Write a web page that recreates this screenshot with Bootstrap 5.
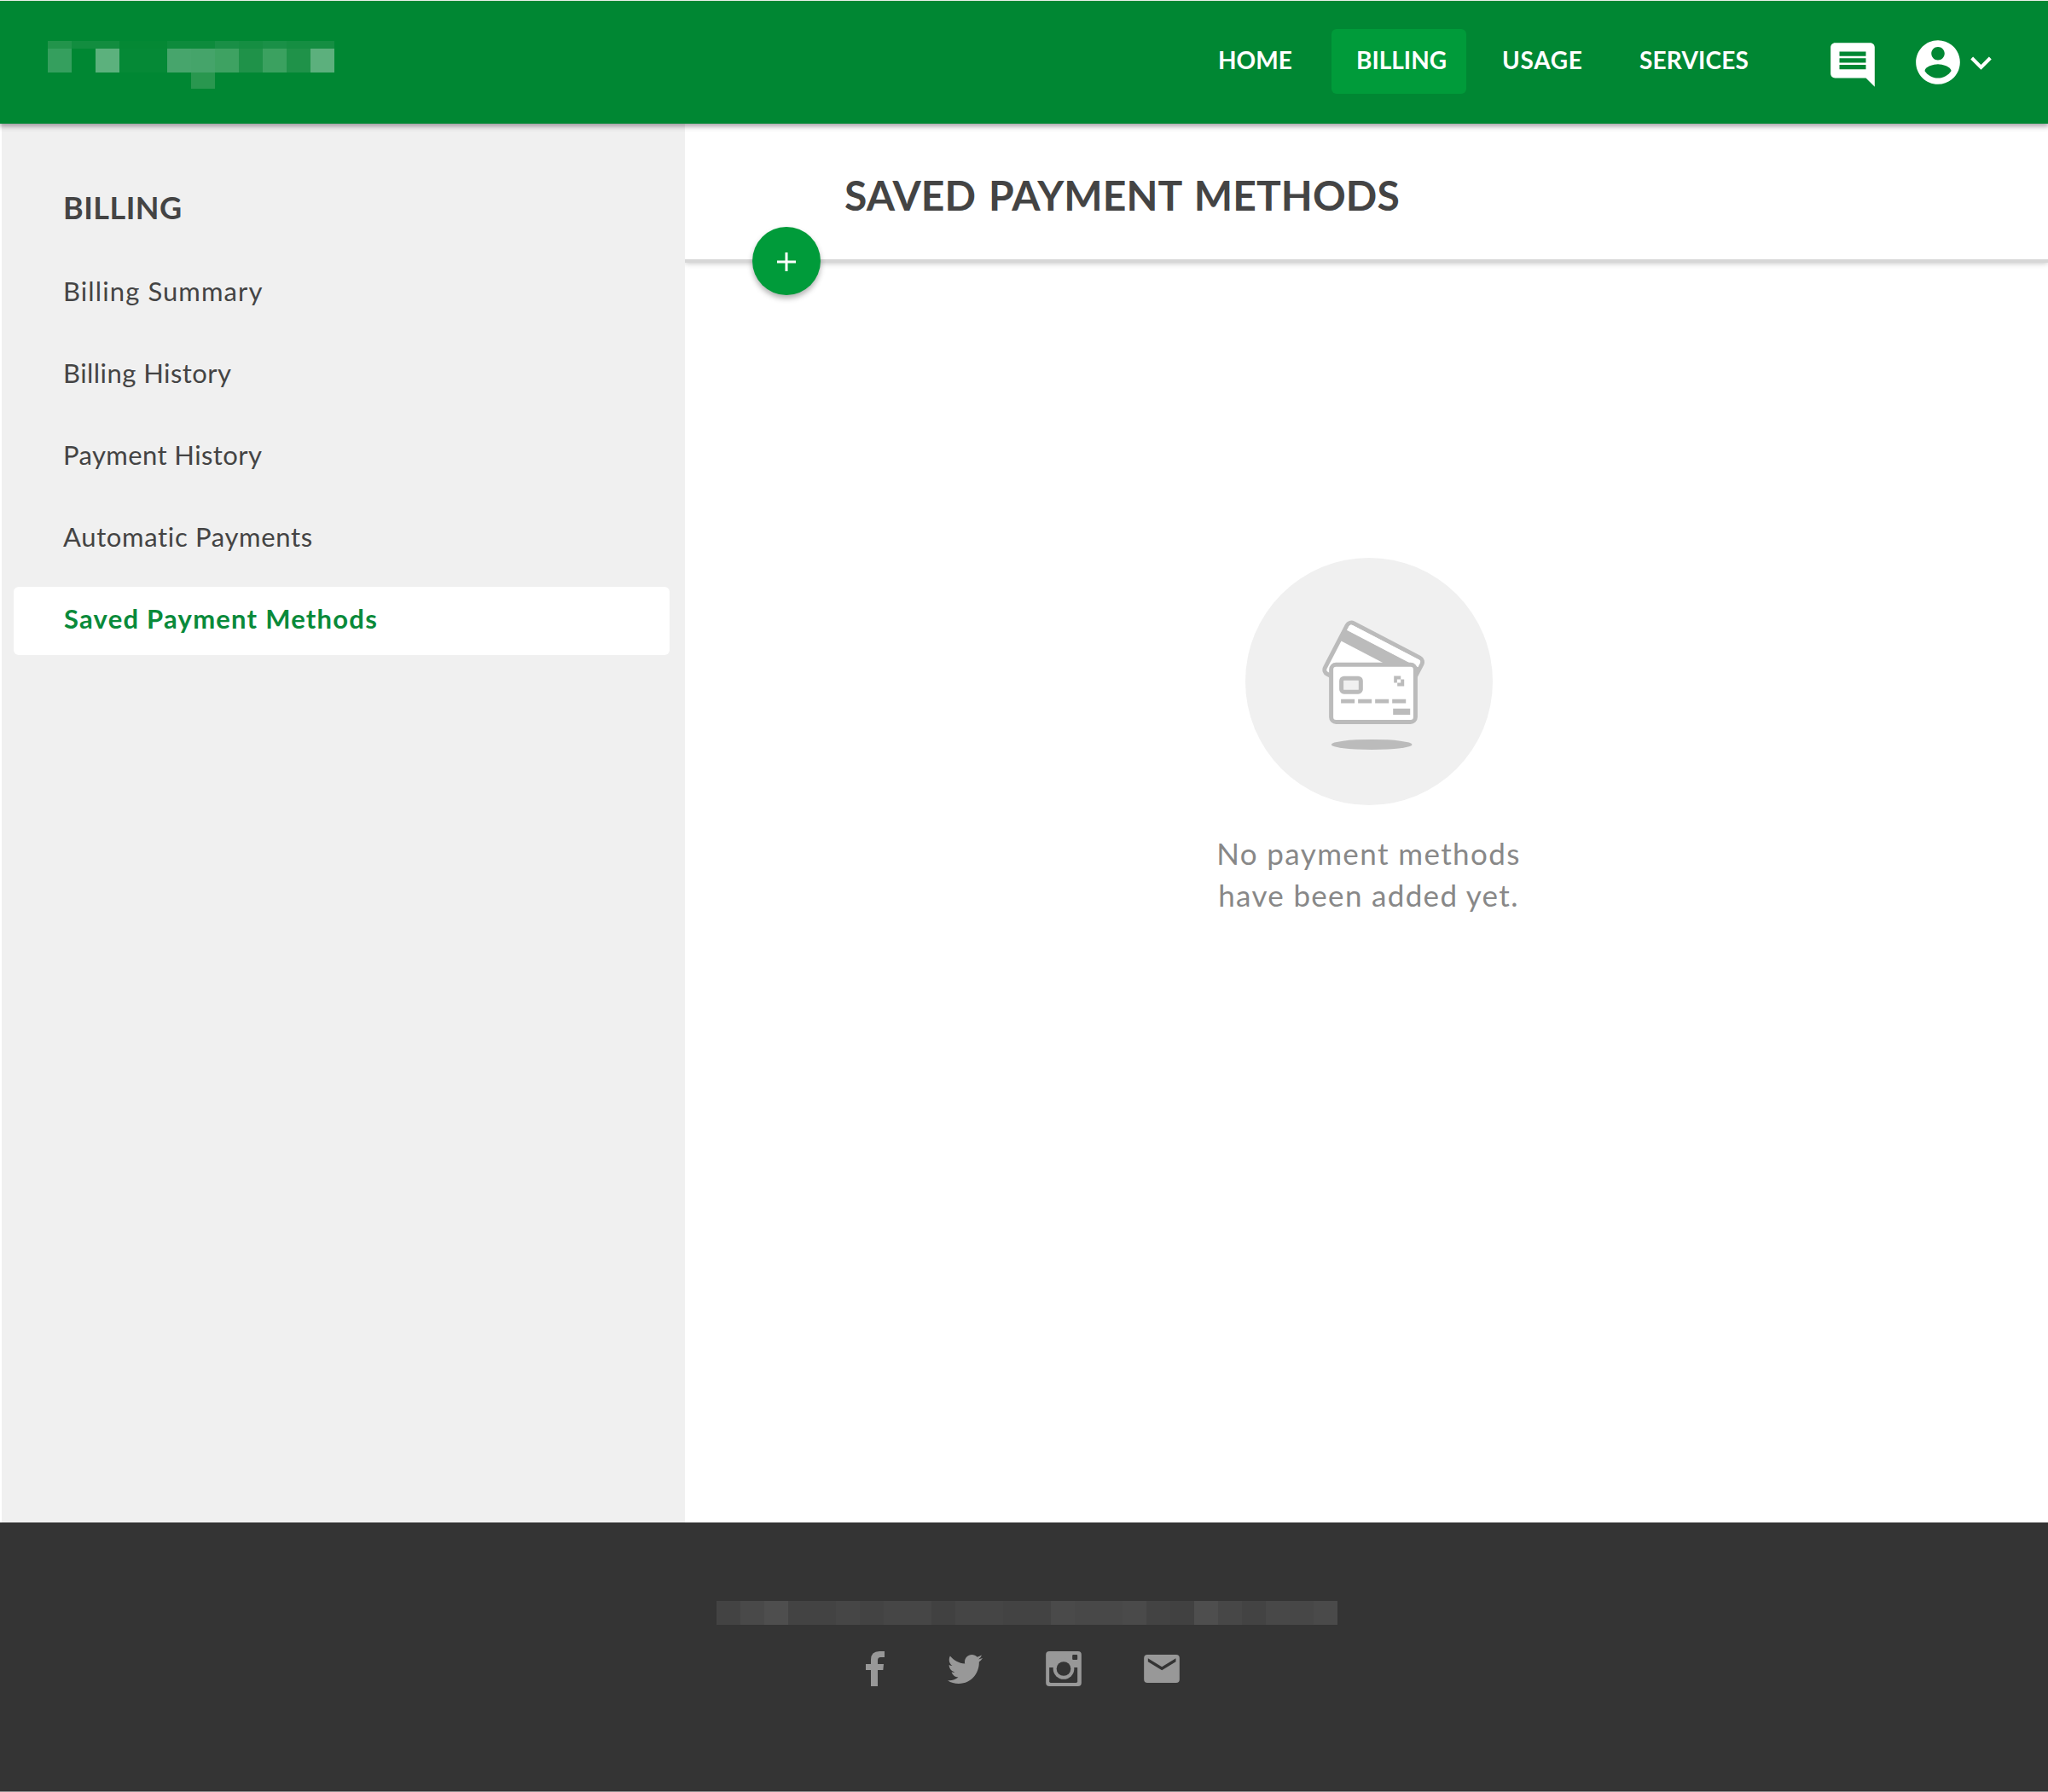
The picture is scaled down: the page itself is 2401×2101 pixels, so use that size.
<!DOCTYPE html>
<html lang="en">
<head>
<meta charset="utf-8">
<meta name="viewport" content="width=device-width, initial-scale=1">
<title>Saved Payment Methods</title>
<link href="https://cdn.jsdelivr.net/npm/bootstrap@5.3.0/dist/css/bootstrap.min.css" rel="stylesheet">
<style>
  body { font-family: Lato, "Open Sans", sans-serif; color: #444; min-height: 2101px; background: #fff; }
  svg { display: block; flex: none; }

  .topbar { height: 145px; background: #008733; border-top: 1px solid #e9efeb; box-shadow: 0 2px 6px 1px rgba(40,20,40,.42); z-index: 3; }
  .brand-mosaic { margin: 47px 0 0 56px; }
  .topnav .nav-link { height: 76px; margin-top: 33px; padding: 0 0 3px 29px; font-size: 28px; line-height: 73px; font-weight: 700; color: #fff; border-radius: 6px; white-space: nowrap; }
  .topnav .nav-link.active { background: #009b3a; }
  .nl-home { width: 146px; margin-right: 16px; }
  .nl-billing { width: 158px; margin-right: 13px; }
  .nl-usage { width: 145px; margin-right: 16px; letter-spacing: .7px; }
  .nl-services { width: 182px; margin-right: 66px; letter-spacing: .2px; }
  .ic-chat { margin: 44px 38px 0 0; }
  .ic-user { margin-top: 41px; }
  .ic-caret { margin: 48px 54px 0 -5px; }

  .sidebar { width: 801px; margin-left: 2px; background: #f0f0f0; padding: 68px 18px 0 14px; flex: none; z-index: 2; }
  .sidebar h2 { font-size: 36px; line-height: 60px; font-weight: 700; letter-spacing: .47px; margin: 0 0 31px; padding-left: 58px; color: #444; }
  .sidebar .nav { gap: 16px; }
  .sidebar .nav-link { height: 80px; padding: 0 0 6px 58px; font-size: 31px; line-height: 74px; color: #444; border-radius: 6px; }
  .sidebar .nav-link.active { background: #fff; color: #098a3a; font-weight: 700; letter-spacing: 1.23px; padding-left: 59px; }
  .sp-a { letter-spacing: 1.1px; } .sp-b { letter-spacing: .45px; } .sp-c { letter-spacing: .4px; } .sp-d { letter-spacing: .65px; }

  .title-bar { height: 159px; padding: 53px 0 0 187px; box-shadow: 0 4px 0 #d7d7d7, 0 5px 6px rgba(0,0,0,.22); z-index: 1; }
  .title-bar h1 { font-size: 48px; line-height: 61px; font-weight: 700; letter-spacing: .1px; word-spacing: 3px; margin: 0; color: #444; }
  .fab { width: 80px; height: 80px; left: 79px; bottom: -42px; background: #009b3a; box-shadow: 0 4px 6px rgba(0,0,0,.3); border: 0; padding: 0; }

  .empty-state { padding: 350px 0 0 5px; }
  .empty-state p { font-size: 35px; line-height: 49px; color: #888; margin: 32px 0 0; letter-spacing: 1.4px; }
  .empty-state .ln2 { letter-spacing: 1.32px; }

  .site-footer { height: 316px; background: #343434; border-bottom: 1px solid #8c8c8c; padding-top: 92px; }
  .legal-mosaic { margin-left: 7px; }
  .social { margin-top: 31px; padding-right: 3px; fill: #989898; }
  .social .so-gap { margin-left: 74px; }
  .social .so-mail { margin-left: 73px; }
</style>
<script src="https://cdn.jsdelivr.net/npm/bootstrap@5.3.0/dist/js/bootstrap.bundle.min.js"></script>
</head>
<body class="d-flex flex-column">

<header class="topbar d-flex align-items-start position-relative">
  <svg class="brand-mosaic" width="336" height="56" viewBox="0 0 336 56" shape-rendering="crispEdges" role="img" aria-label="Logo">
    <path fill="#22944b" d="M0 0h28v9H0z"/><path fill="#128d3f" d="M28 0h56v9H28z"/><path fill="#048834" d="M84 0h56v9H84z"/>
    <path fill="#0d8b3c" d="M140 0h56v9h-56z"/><path fill="#198f46" d="M196 0h28v9h-28z"/><path fill="#158e42" d="M224 0h28v9h-28z"/>
    <path fill="#1a9047" d="M252 0h28v9h-28z"/><path fill="#158e42" d="M280 0h56v9h-56z"/>
    <path fill="#359f5e" d="M0 9h28v28H0z"/><path fill="#5cb17d" d="M56 9h28v28H56z"/><path fill="#058936" d="M84 9h56v28H84z"/>
    <path fill="#47a56c" d="M140 9h28v28h-28z"/><path fill="#45a46a" d="M168 9h28v28h-28z"/><path fill="#3ea262" d="M196 9h28v28h-28z"/>
    <path fill="#1f9249" d="M224 9h28v28h-28z"/><path fill="#3ba160" d="M252 9h28v28h-28z"/><path fill="#1f9249" d="M280 9h28v28h-28z"/>
    <path fill="#5cb07d" d="M308 9h28v28h-28z"/><path fill="#29974f" d="M168 37h28v19h-28z"/>
  </svg>
  <nav class="topnav d-flex align-items-start ms-auto">
    <a class="nav-link nl-home" href="#">HOME</a>
    <a class="nav-link nl-billing active" href="#">BILLING</a>
    <a class="nav-link nl-usage" href="#">USAGE</a>
    <a class="nav-link nl-services" href="#">SERVICES</a>
    <svg class="ic-chat" width="62" height="62" viewBox="0 0 24 24" fill="#fff"><path d="M21.99 4c0-1.1-.89-2-1.99-2H4c-1.1 0-2 .9-2 2v12c0 1.1.9 2 2 2h14l4 4-.01-18zM18 14H6v-2h12v2zm0-3H6V9h12v2zm0-3H6V6h12v2z"/></svg>
    <svg class="ic-user" width="62" height="62" viewBox="0 0 24 24" fill="#fff"><path d="M12 2C6.48 2 2 6.48 2 12s4.48 10 10 10 10-4.48 10-10S17.52 2 12 2zm0 3c1.66 0 3 1.34 3 3s-1.34 3-3 3-3-1.34-3-3 1.34-3 3-3zm0 14.2c-2.5 0-4.71-1.28-6-3.22.03-1.99 4-3.08 6-3.08 1.99 0 5.97 1.09 6 3.08-1.29 1.94-3.5 3.22-6 3.22z"/></svg>
    <svg class="ic-caret" width="49" height="49" viewBox="0 0 24 24" fill="#fff"><path d="M16.59 8.59L12 13.17 7.41 8.59 6 10l6 6 6-6z"/></svg>
  </nav>
</header>

<div class="d-flex flex-grow-1">
  <aside class="sidebar">
    <h2>BILLING</h2>
    <nav class="nav flex-column">
      <a class="nav-link sp-a" href="#">Billing Summary</a>
      <a class="nav-link sp-b" href="#">Billing History</a>
      <a class="nav-link sp-c" href="#">Payment History</a>
      <a class="nav-link sp-d" href="#">Automatic Payments</a>
      <a class="nav-link active" href="#">Saved Payment Methods</a>
    </nav>
  </aside>
  <main class="flex-grow-1">
    <div class="title-bar position-relative">
      <h1>SAVED PAYMENT METHODS</h1>
      <button class="fab btn rounded-circle position-absolute d-flex align-items-center justify-content-center" type="button" aria-label="Add payment method">
        <svg width="24" height="24" viewBox="0 0 24 24" stroke="#fff" stroke-width="3"><path d="M1 13h22M12 2v22"/></svg>
      </button>
    </div>
    <section class="empty-state d-flex flex-column align-items-center text-center">
      <svg width="290" height="290" viewBox="60 43 869 869">
        <circle cx="494.5" cy="477.5" r="434.5" fill="#f0f0f0"/>
        <g transform="translate(422 255) rotate(27.5)">
          <rect x="7.5" y="7.5" width="296" height="201" rx="17" fill="#fff" stroke="#bbb" stroke-width="15"/>
          <path fill="#bbb" d="M8 40h295v43H8z"/>
          <path fill="#fff" d="M24 15h263q9 0 9 9v15H15V24q0-9 9-9z"/>
        </g>
        <rect x="361.5" y="418.5" width="296" height="201" rx="17" fill="#fff" stroke="#bbb" stroke-width="15"/>
        <rect x="397.5" y="466" width="68" height="48" rx="9" fill="#f0f0f0" stroke="#bbb" stroke-width="15"/>
        <path fill="#bbb" d="M396 540h48v14h-48zM456 540h48v14h-48zM516 540h48v14h-48zM576 540h48v14h-48zM579 573h60v21h-60z"/>
        <path fill="#bbb" d="M582 458h24v12h-13v12h-11zM606 470h12v24h-24v-12h12z"/>
        <ellipse cx="504" cy="699" rx="142" ry="18" fill="#bbb"/>
      </svg>
      <p>No payment methods<br><span class="ln2">have been added yet.</span></p>
    </section>
  </main>
</div>

<footer class="site-footer d-flex flex-column align-items-center">
  <svg class="legal-mosaic" width="728" height="28" viewBox="0 0 26 1" shape-rendering="crispEdges">
    <path fill="#434343" d="M0 0h26v1H0z"/>
    <path fill="#494949" d="M1 0h1v1H1z"/><path fill="#4e4e4e" d="M2 0h1v1H2zM20 0h1v1h-1z"/>
    <path fill="#464646" d="M5 0h1v1H5zM7 0h2v1H7z"/><path fill="#414141" d="M9 0h1v1H9zM19 0h1v1h-1z"/><path fill="#454545" d="M10 0h2v1h-2z"/>
    <path fill="#4a4a4a" d="M14 0h1v1h-1zM17 0h1v1h-1zM25 0h1v1h-1z"/><path fill="#484848" d="M15 0h2v1h-2zM23 0h1v1h-1z"/>
    <path fill="#474747" d="M21 0h1v1h-1zM24 0h1v1h-1z"/>
  </svg>
  <div class="social d-flex align-items-center">
    <svg width="22" height="41" viewBox="585 258 66 123"><path d="M651 258V279H637Q627 279 627 290V303H648L646 324H627V381H603V324H585V303H603V288Q603 258 633 258Z"/></svg>
    <svg class="so-gap" width="41" height="34" viewBox="1.54 4 20.92 17" preserveAspectRatio="none"><path d="M22.46 6C21.69 6.35 20.86 6.58 20 6.69C20.88 6.16 21.56 5.32 21.88 4.31C21.05 4.81 20.13 5.16 19.16 5.36C18.37 4.5 17.26 4 16 4C13.65 4 11.73 5.92 11.73 8.29C11.73 8.63 11.77 8.96 11.84 9.27C8.28 9.09 5.11 7.38 3 4.79C2.63 5.42 2.42 6.16 2.42 6.94C2.42 8.43 3.17 9.75 4.33 10.5C3.62 10.5 2.96 10.3 2.38 10V10.03C2.38 12.11 3.86 13.85 5.82 14.24C5.46 14.34 5.08 14.39 4.69 14.39C4.42 14.39 4.15 14.36 3.89 14.31C4.43 16 6 17.26 7.89 17.29C6.43 18.45 4.58 19.13 2.56 19.13C2.22 19.13 1.88 19.11 1.54 19.07C3.44 20.29 5.7 21 8.12 21C16 21 20.33 14.46 20.33 8.79C20.33 8.6 20.33 8.42 20.32 8.23C21.16 7.63 21.88 6.87 22.46 6Z"/></svg>
    <svg class="so-gap" width="42" height="41" viewBox="78 258 125 123">
      <rect x="78" y="258" width="125" height="123" rx="12"/>
      <path fill="#343434" d="M90 315h99v49q0 5-5 5H95q-5 0-5-5z"/>
      <circle cx="140.5" cy="319.5" r="37"/><circle cx="140.5" cy="319.5" r="25" fill="#343434"/>
      <rect x="171" y="270" width="18" height="18" rx="3" fill="#343434"/>
    </svg>
    <svg class="so-mail" width="42" height="33" viewBox="424 270 125 99">
      <rect x="424" y="270" width="125" height="99" rx="12"/>
      <path fill="#343434" d="M438 283L487 313L536 283V295L487 325L438 295Z"/>
    </svg>
  </div>
</footer>
</body>
</html>
